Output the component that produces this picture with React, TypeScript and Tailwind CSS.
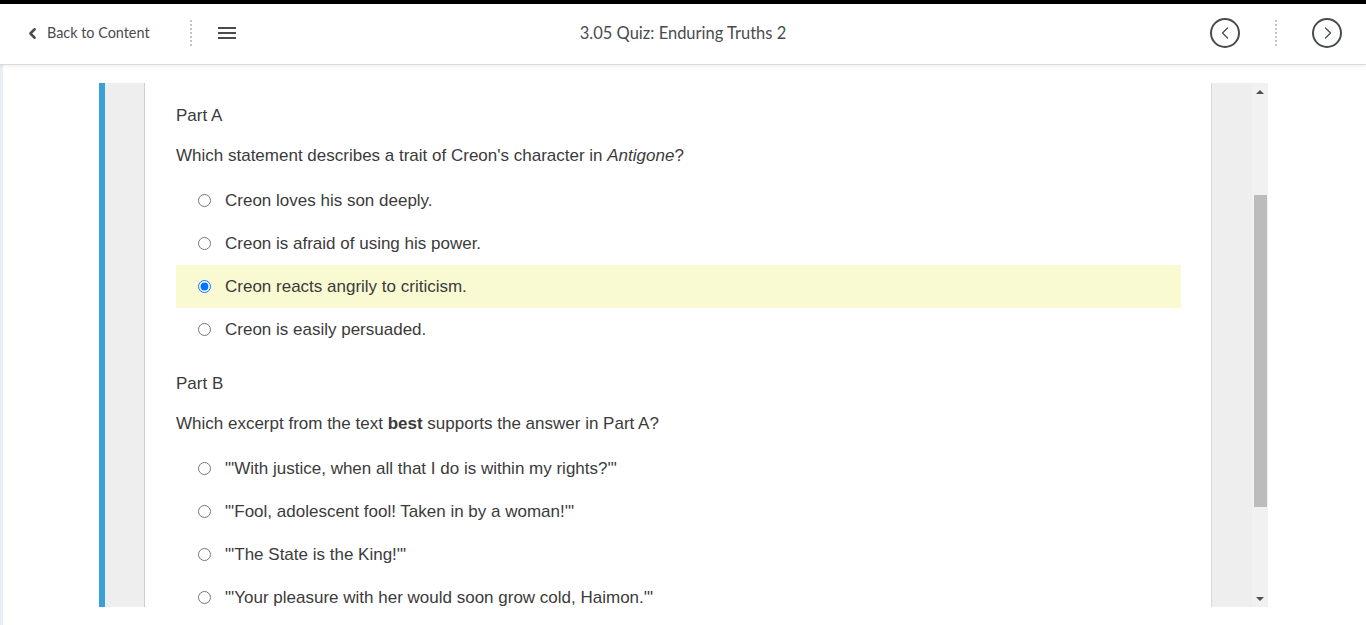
import React from 'react';
import { ChevronLeft, ChevronRight } from 'lucide-react';

const partA = [
  'Creon loves his son deeply.',
  'Creon is afraid of using his power.',
  'Creon reacts angrily to criticism.',
  'Creon is easily persuaded.',
];

const partB = [
  '"\'With justice, when all that I do is within my rights?\'"',
  '"\'Fool, adolescent fool! Taken in by a woman!\'"',
  '"\'The State is the King!\'"',
  '"\'Your pleasure with her would soon grow cold, Haimon.\'"',
];

// dotted vertical divider used in the nav bar
const Dots: React.FC = () => (
  <div className="flex flex-col gap-[2px]">
    {Array.from({ length: 7 }).map((_, i) => (
      <span key={i} className="block w-[2px] h-[2px] rounded-full bg-[#b0b0b0]" />
    ))}
  </div>
);

const Option: React.FC<{ text: string; name: string; selected?: boolean }> = ({ text, name, selected }) => (
  <label className={`flex items-center h-[43px] pl-[22px] ${selected ? 'bg-[#fafad2]' : ''}`}>
    <input type="radio" name={name} defaultChecked={selected} className="m-0 w-[13px] h-[13px]" />
    <span className="ml-[14px]">{text}</span>
  </label>
);

export default function App() {
  return (
    <div className="h-screen flex flex-col overflow-hidden bg-white" style={{ fontFamily: '"Liberation Sans", Arial, sans-serif' }}>
      <div className="h-[4px] bg-black shrink-0" />

      {/* nav bar */}
      <header
        className="h-[61px] shrink-0 grid grid-cols-[1fr_auto_1fr] items-center border-b border-[#dcdcdc] shadow-[0_1px_3px_rgba(0,0,0,0.08)] text-[#494c4e] relative z-10 pb-[2px]"
        style={{ fontFamily: 'Lato, "Open Sans", sans-serif' }}
      >
        <div className="flex items-center pl-[24px]">
          <ChevronLeft size={17} strokeWidth={3.5} className="text-[#494c4e]" />
          <span className="ml-[6px] text-[14.4px]">Back to Content</span>
          <div className="ml-[40px]"><Dots /></div>
          <div className="flex flex-col gap-[3px] ml-[26px]">
            <span className="block w-[18px] h-[2px] bg-[#494c4e]" />
            <span className="block w-[18px] h-[2px] bg-[#494c4e]" />
            <span className="block w-[18px] h-[2px] bg-[#494c4e]" />
          </div>
        </div>
        <div className="text-center text-[16.5px]">3.05 Quiz: Enduring Truths 2</div>
        <div className="flex items-center justify-end gap-[35px] pr-[24px]">
          <button className="w-[30px] h-[30px] rounded-full border-2 border-[#494c4e] flex items-center justify-center">
            <ChevronLeft size={20} strokeWidth={1.5} className="mr-[1px]" />
          </button>
          <Dots />
          <button className="w-[30px] h-[30px] rounded-full border-2 border-[#494c4e] flex items-center justify-center">
            <ChevronRight size={20} strokeWidth={1.5} className="ml-[1px]" />
          </button>
        </div>
      </header>

      {/* page */}
      <main className="flex-1 border-l-[3px] border-[#eaedf1] pt-[18px]">
        <div className="ml-[96px] w-[1169px] h-[524px] flex">
          <div className="w-[6px] bg-[#3a9fd6]" />
          <div className="w-[40px] bg-[#eeeeee] border-r border-[#cfcfcf]" />
          <div className="flex-1 overflow-hidden pl-[31px] pr-[30px] pt-[23px] text-[17px] text-[#3b3b3b]">
            <div className="leading-[20px]">Part A</div>
            <div className="leading-[20px] mt-[20px]">
              Which statement describes a trait of Creon's character in <i>Antigone</i>?
            </div>
            <div className="mt-[13px]">
              {partA.map((t, i) => (
                <Option key={t} text={t} name="a" selected={i === 2} />
              ))}
            </div>
            <div className="leading-[20px] mt-[23px]">Part B</div>
            <div className="leading-[20px] mt-[20px]">
              Which excerpt from the text <b>best</b> supports the answer in Part A?
            </div>
            <div className="mt-[13px]">
              {partB.map((t) => (
                <Option key={t} text={t} name="b" />
              ))}
            </div>
          </div>
          {/* scrollbar column */}
          <div className="w-[57px] bg-[#eeeeee] border-l border-[#d9d9d9] flex justify-end">
            <div className="w-[16px] bg-[#f1f1f1] flex flex-col items-center">
              <div className="h-[17px] flex items-center justify-center">
                <span className="block w-0 h-0 border-l-[4px] border-r-[4px] border-b-[4px] border-l-transparent border-r-transparent border-b-[#505050]" />
              </div>
              <div className="mt-[95px] w-[13px] h-[312px] bg-[#bcbcbc]" />
              <div className="mt-auto h-[17px] flex items-center justify-center">
                <span className="block w-0 h-0 border-l-[4px] border-r-[4px] border-t-[4px] border-l-transparent border-r-transparent border-t-[#505050]" />
              </div>
            </div>
          </div>
        </div>
      </main>
    </div>
  );
}
